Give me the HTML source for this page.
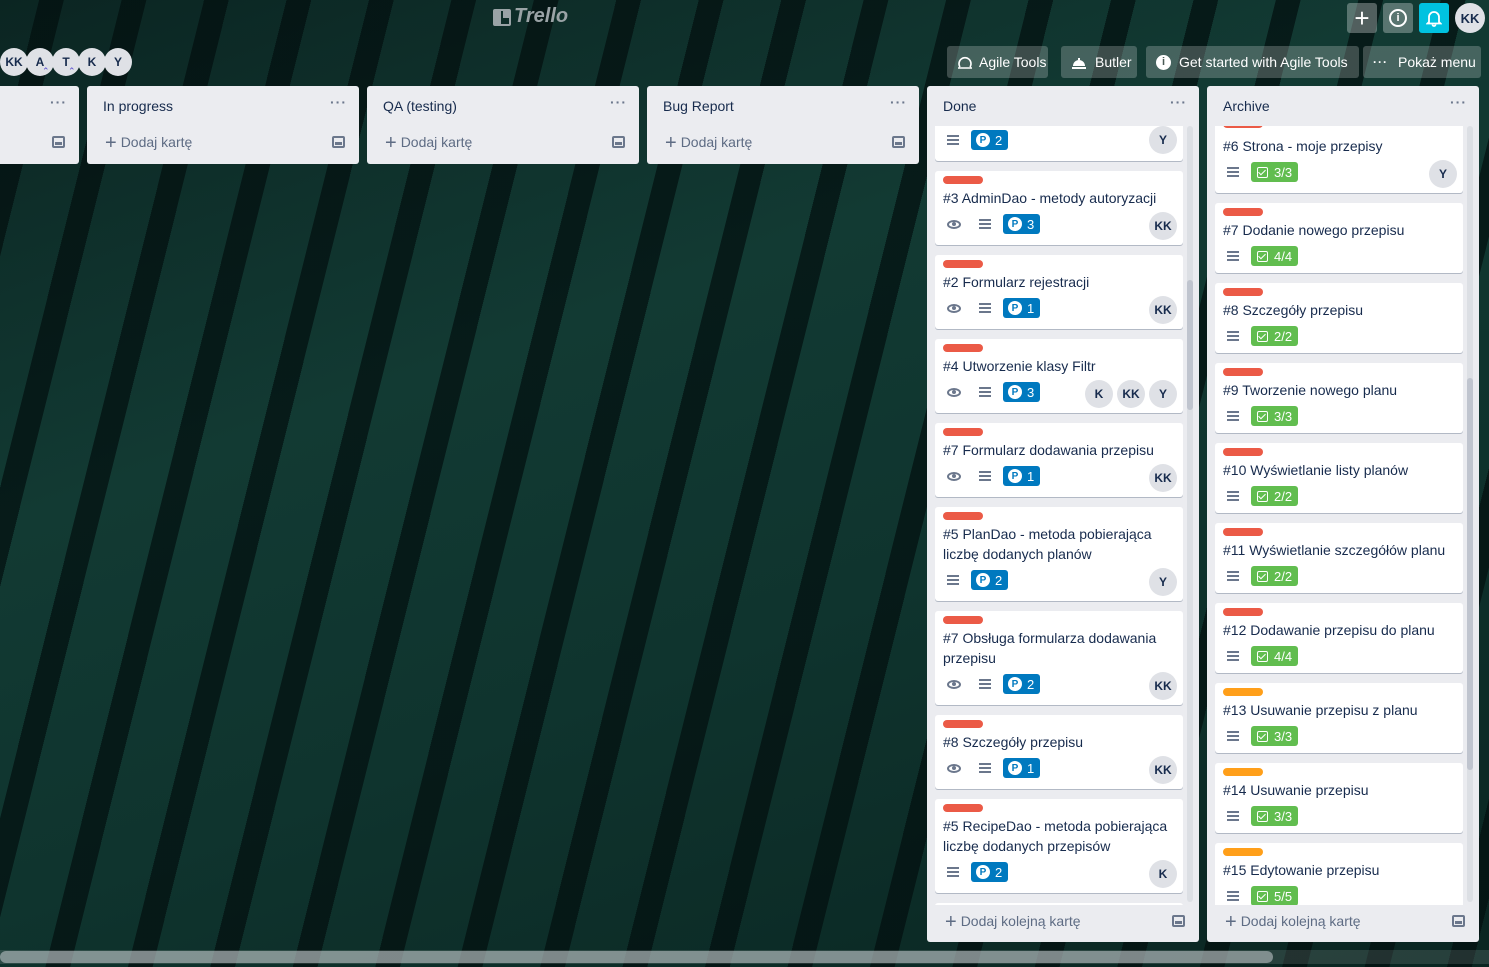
<!DOCTYPE html>
<html><head><meta charset="utf-8">
<style>
*{box-sizing:border-box;margin:0;padding:0}
body{width:1489px;height:967px;overflow:hidden;position:relative;font-family:"Liberation Sans","DejaVu Sans",sans-serif;font-size:14px;color:#172b4d;
background:
repeating-linear-gradient(104deg,rgba(0,0,0,0) 0px,rgba(0,0,0,0) 38px,rgba(2,14,14,.7) 38px,rgba(2,14,14,.7) 62px,rgba(0,0,0,0) 62px,rgba(0,0,0,0) 80px),
linear-gradient(160deg,#0b2522 0%,#123a33 35%,#0f342e 60%,#0a2521 100%);}
.abs{position:absolute}
.tb{position:absolute;top:3px;width:30px;height:30px;border-radius:3px;background:rgba(255,255,255,.3);color:#fff;display:flex;align-items:center;justify-content:center}
.btn{position:absolute;top:46px;height:32px;border-radius:3px;background:rgba(255,255,255,.22);color:#fff;font-size:14px;display:flex;align-items:center;padding-left:10px}
.mav{position:absolute;top:48px;width:28px;height:28px;border-radius:50%;background:#dfe1e6;font-size:12px;font-weight:bold;display:flex;align-items:center;justify-content:center;color:#172b4d}
.list{position:absolute;top:86px;width:272px;background:#ebecf0;border-radius:3px}
.lh{position:absolute;left:16px;top:12px;font-size:14px;font-weight:normal}
.dots{position:absolute;right:12px;top:8px;color:#6b778c;font-size:14px;letter-spacing:1px;font-weight:bold}
.add{position:absolute;left:18px;color:#5e6c84;font-size:14px}
.add b{font-weight:normal;font-size:20px;margin-right:4px;vertical-align:-2px}
.tpl{position:absolute;right:14px;width:13px;height:12px;border:2px solid #6b778c;border-radius:2px}
.tpl:after{content:"";position:absolute;left:1px;right:1px;bottom:1px;height:3px;background:#6b778c}
.card{position:absolute;width:248px;background:#fff;border-radius:3px;box-shadow:0 1px 0 rgba(9,30,66,.25)}
.lbl{position:absolute;left:8px;width:40px;height:8px;border-radius:4px;background:#eb5a46}
.lbl.o{background:#ff9f1a}
.tt{position:absolute;left:8px;right:8px;line-height:20px;font-size:14px;color:#172b4d}
.row{position:absolute;left:8px;height:20px;display:flex;align-items:center}
.eye{width:14px;height:9px;border:2px solid #6b778c;border-radius:50%;margin:0 14px 0 4px;position:relative}
.eye:after{content:"";position:absolute;left:3px;top:0.5px;width:4px;height:4px;border-radius:50%;background:#6b778c}
.desc{width:12px;height:10px;margin:0 12px 0 4px;background:linear-gradient(#6b778c 0 2px,transparent 2px 4px,#6b778c 4px 6px,transparent 6px 8px,#6b778c 8px 10px);position:relative}
.pb{height:20px;background:#0079bf;border-radius:3px;color:#fff;display:flex;align-items:center;padding:0 6px 0 5px;font-size:13px}
.pb i{width:14px;height:14px;border-radius:50%;background:#fff;color:#0079bf;font-style:normal;font-weight:bold;font-size:10px;display:flex;align-items:center;justify-content:center;margin-right:5px}
.gb{height:20px;background:#61bd4f;border-radius:3px;color:#fff;display:flex;align-items:center;padding:0 6px;font-size:13px}
.gb i{width:11px;height:11px;border:1.5px solid #fff;border-radius:2px;margin-right:6px;position:relative}
.gb i:after{content:"";position:absolute;left:2px;top:0px;width:3px;height:6px;border:solid #fff;border-width:0 1.5px 1.5px 0;transform:rotate(45deg)}
.av{position:absolute;width:28px;height:28px;border-radius:50%;background:#dfe1e6;font-size:12px;font-weight:bold;display:flex;align-items:center;justify-content:center;color:#172b4d}
.clip{position:absolute;overflow:hidden}
.sb{position:absolute;width:6px;background:#dcdfe4;border-radius:3px}
.sb i{position:absolute;left:0;width:6px;background:#bfc4ce;border-radius:3px}
</style></head><body>

<div class="abs" style="left:493px;top:9px;width:18px;height:17px;border:2px solid #9aa3a6;border-radius:2px"><div style="position:absolute;left:0;top:0;width:6px;height:13px;background:#9aa3a6"></div><div style="position:absolute;left:8px;top:0;width:6px;height:7px;background:#9aa3a6"></div></div>
<div class="abs" style="left:514px;top:5px;font-size:20px;font-style:italic;font-weight:bold;color:#9aa3a6">Trello</div>

<div class="tb" style="left:1347px;font-size:26px;font-weight:300">+</div>
<div class="tb" style="left:1383px"><div style="width:18px;height:18px;border:2px solid #fff;border-radius:50%;font-size:11px;font-weight:bold;display:flex;align-items:center;justify-content:center">i</div></div>
<div class="tb" style="left:1419px;background:#00c2e0"><svg width="16" height="18" viewBox="0 0 16 18"><path d="M3 13V8a5 5 0 0 1 10 0v5l1.5 1.5h-13z M6.5 15.5a1.5 1.5 0 0 0 3 0" fill="none" stroke="#fff" stroke-width="1.8"/></svg></div>
<div class="abs" style="left:1455px;top:3px;width:30px;height:30px;border-radius:50%;background:#dfe1e6;font-weight:bold;font-size:13px;display:flex;align-items:center;justify-content:center">KK</div>

<div class="btn" style="left:947px;width:101px"><svg width="16" height="16" viewBox="0 0 16 16"><path d="M3 13a6 6 0 1 1 10 0M1 14h14" fill="none" stroke="#fff" stroke-width="1.6"/></svg><span style="margin-left:6px">Agile Tools</span></div>
<div class="btn" style="left:1061px;width:76px"><svg width="16" height="14" viewBox="0 0 16 14"><path d="M2 11a6 6 0 0 1 12 0z M1 12h14v2H1z M7 3h2v2H7z" fill="#fff"/></svg><span style="margin-left:8px">Butler</span></div>
<div class="btn" style="left:1146px;width:213px"><div style="width:15px;height:15px;border-radius:50%;background:#fff;color:#4a5a55;font-size:11px;font-weight:bold;display:flex;align-items:center;justify-content:center">i</div><span style="margin-left:8px">Get started with Agile Tools</span></div>
<div class="btn" style="left:1363px;width:118px"><span style="font-weight:bold;letter-spacing:1px;font-size:12px">···</span><span style="margin-left:10px">Pokaż menu</span></div>

<div class="mav" style="left:0">KK</div>
<div class="mav" style="left:26px">A</div>
<div class="mav" style="left:52px">T</div>
<div class="mav" style="left:78px">K</div>
<div class="mav" style="left:104px">Y</div>
<div class="abs" style="left:42px;top:66px;color:#5a4ed1;font-size:9px">⌃</div>
<div class="abs" style="left:68px;top:66px;color:#5a4ed1;font-size:9px">⌃</div>

<div class="list" style="left:-193px;height:78px"><div class="dots">···</div><div class="tpl" style="top:50px"></div></div>
<div class="list" style="left:87px;height:78px"><div class="lh">In progress</div><div class="dots">···</div><div class="add" style="top:46px"><b>+</b>Dodaj kartę</div><div class="tpl" style="top:50px"></div></div>
<div class="list" style="left:367px;height:78px"><div class="lh">QA (testing)</div><div class="dots">···</div><div class="add" style="top:46px"><b>+</b>Dodaj kartę</div><div class="tpl" style="top:50px"></div></div>
<div class="list" style="left:647px;height:78px"><div class="lh">Bug Report</div><div class="dots">···</div><div class="add" style="top:46px"><b>+</b>Dodaj kartę</div><div class="tpl" style="top:50px"></div></div>

<div class="list" style="left:927px;height:856px"><div class="lh">Done</div><div class="dots">···</div><div class="add" style="top:825px"><b>+</b>Dodaj kolejną kartę</div><div class="tpl" style="top:829px"></div>
<div class="sb" style="left:260px;top:40px;height:776px"><i style="top:154px;height:130px"></i></div></div>
<div class="clip" style="left:935px;top:126px;width:250px;height:779px">
 <div class="card" style="top:-40px;height:75px"><div class="row" style="top:44px"><span class="desc"></span><span class="pb"><i>P</i>2</span></div><div class="av" style="right:6px;top:40px">Y</div></div>
 <div class="card" style="top:45px;height:74px"><div class="lbl" style="top:5px"></div><div class="tt" style="top:17px">#3 AdminDao - metody autoryzacji</div><div class="row" style="top:43px"><span class="eye"></span><span class="desc"></span><span class="pb"><i>P</i>3</span></div><div class="av" style="right:6px;top:41px">KK</div></div>
 <div class="card" style="top:129px;height:74px"><div class="lbl" style="top:5px"></div><div class="tt" style="top:17px">#2 Formularz rejestracji</div><div class="row" style="top:43px"><span class="eye"></span><span class="desc"></span><span class="pb"><i>P</i>1</span></div><div class="av" style="right:6px;top:41px">KK</div></div>
 <div class="card" style="top:213px;height:74px"><div class="lbl" style="top:5px"></div><div class="tt" style="top:17px">#4 Utworzenie klasy Filtr</div><div class="row" style="top:43px"><span class="eye"></span><span class="desc"></span><span class="pb"><i>P</i>3</span></div><div class="av" style="right:70px;top:41px">K</div><div class="av" style="right:38px;top:41px">KK</div><div class="av" style="right:6px;top:41px">Y</div></div>
 <div class="card" style="top:297px;height:74px"><div class="lbl" style="top:5px"></div><div class="tt" style="top:17px">#7 Formularz dodawania przepisu</div><div class="row" style="top:43px"><span class="eye"></span><span class="desc"></span><span class="pb"><i>P</i>1</span></div><div class="av" style="right:6px;top:41px">KK</div></div>
 <div class="card" style="top:381px;height:94px"><div class="lbl" style="top:5px"></div><div class="tt" style="top:17px">#5 PlanDao - metoda pobierająca liczbę dodanych planów</div><div class="row" style="top:63px"><span class="desc"></span><span class="pb"><i>P</i>2</span></div><div class="av" style="right:6px;top:61px">Y</div></div>
 <div class="card" style="top:485px;height:94px"><div class="lbl" style="top:5px"></div><div class="tt" style="top:17px">#7 Obsługa formularza dodawania przepisu</div><div class="row" style="top:63px"><span class="eye"></span><span class="desc"></span><span class="pb"><i>P</i>2</span></div><div class="av" style="right:6px;top:61px">KK</div></div>
 <div class="card" style="top:589px;height:74px"><div class="lbl" style="top:5px"></div><div class="tt" style="top:17px">#8 Szczegóły przepisu</div><div class="row" style="top:43px"><span class="eye"></span><span class="desc"></span><span class="pb"><i>P</i>1</span></div><div class="av" style="right:6px;top:41px">KK</div></div>
 <div class="card" style="top:673px;height:94px"><div class="lbl" style="top:5px"></div><div class="tt" style="top:17px">#5 RecipeDao - metoda pobierająca liczbę dodanych przepisów</div><div class="row" style="top:63px"><span class="desc"></span><span class="pb"><i>P</i>2</span></div><div class="av" style="right:6px;top:61px">K</div></div>
 <div class="card" style="top:777px;height:60px"></div>
</div>

<div class="list" style="left:1207px;height:856px"><div class="lh">Archive</div><div class="dots">···</div><div class="add" style="top:825px"><b>+</b>Dodaj kolejną kartę</div><div class="tpl" style="top:829px"></div>
<div class="sb" style="left:260px;top:40px;height:776px"><i style="top:252px;height:392px"></i></div></div>
<div class="clip" style="left:1215px;top:126px;width:250px;height:779px">
 <div class="card" style="top:-9px;height:76px"><div class="lbl" style="top:3px"></div><div class="tt" style="top:19px">#6 Strona - moje przepisy</div><div class="row" style="top:45px"><span class="desc"></span><span class="gb"><i></i>3/3</span></div><div class="av" style="right:6px;top:43px">Y</div></div>
 <div class="card" style="top:77px;height:70px"><div class="lbl" style="top:5px"></div><div class="tt" style="top:17px">#7 Dodanie nowego przepisu</div><div class="row" style="top:43px"><span class="desc"></span><span class="gb"><i></i>4/4</span></div></div>
 <div class="card" style="top:157px;height:70px"><div class="lbl" style="top:5px"></div><div class="tt" style="top:17px">#8 Szczegóły przepisu</div><div class="row" style="top:43px"><span class="desc"></span><span class="gb"><i></i>2/2</span></div></div>
 <div class="card" style="top:237px;height:70px"><div class="lbl" style="top:5px"></div><div class="tt" style="top:17px">#9 Tworzenie nowego planu</div><div class="row" style="top:43px"><span class="desc"></span><span class="gb"><i></i>3/3</span></div></div>
 <div class="card" style="top:317px;height:70px"><div class="lbl" style="top:5px"></div><div class="tt" style="top:17px">#10 Wyświetlanie listy planów</div><div class="row" style="top:43px"><span class="desc"></span><span class="gb"><i></i>2/2</span></div></div>
 <div class="card" style="top:397px;height:70px"><div class="lbl" style="top:5px"></div><div class="tt" style="top:17px">#11 Wyświetlanie szczegółów planu</div><div class="row" style="top:43px"><span class="desc"></span><span class="gb"><i></i>2/2</span></div></div>
 <div class="card" style="top:477px;height:70px"><div class="lbl" style="top:5px"></div><div class="tt" style="top:17px">#12 Dodawanie przepisu do planu</div><div class="row" style="top:43px"><span class="desc"></span><span class="gb"><i></i>4/4</span></div></div>
 <div class="card" style="top:557px;height:70px"><div class="lbl o" style="top:5px"></div><div class="tt" style="top:17px">#13 Usuwanie przepisu z planu</div><div class="row" style="top:43px"><span class="desc"></span><span class="gb"><i></i>3/3</span></div></div>
 <div class="card" style="top:637px;height:70px"><div class="lbl o" style="top:5px"></div><div class="tt" style="top:17px">#14 Usuwanie przepisu</div><div class="row" style="top:43px"><span class="desc"></span><span class="gb"><i></i>3/3</span></div></div>
 <div class="card" style="top:717px;height:70px"><div class="lbl o" style="top:5px"></div><div class="tt" style="top:17px">#15 Edytowanie przepisu</div><div class="row" style="top:43px"><span class="desc"></span><span class="gb"><i></i>5/5</span></div></div>
</div>

<div class="abs" style="left:0;top:950px;width:1489px;height:14px;background:rgba(255,255,255,.12)"></div>
<div class="abs" style="left:0;top:951px;width:1273px;height:12px;border-radius:6px;background:rgba(200,205,210,.55)"></div>
</body></html>
